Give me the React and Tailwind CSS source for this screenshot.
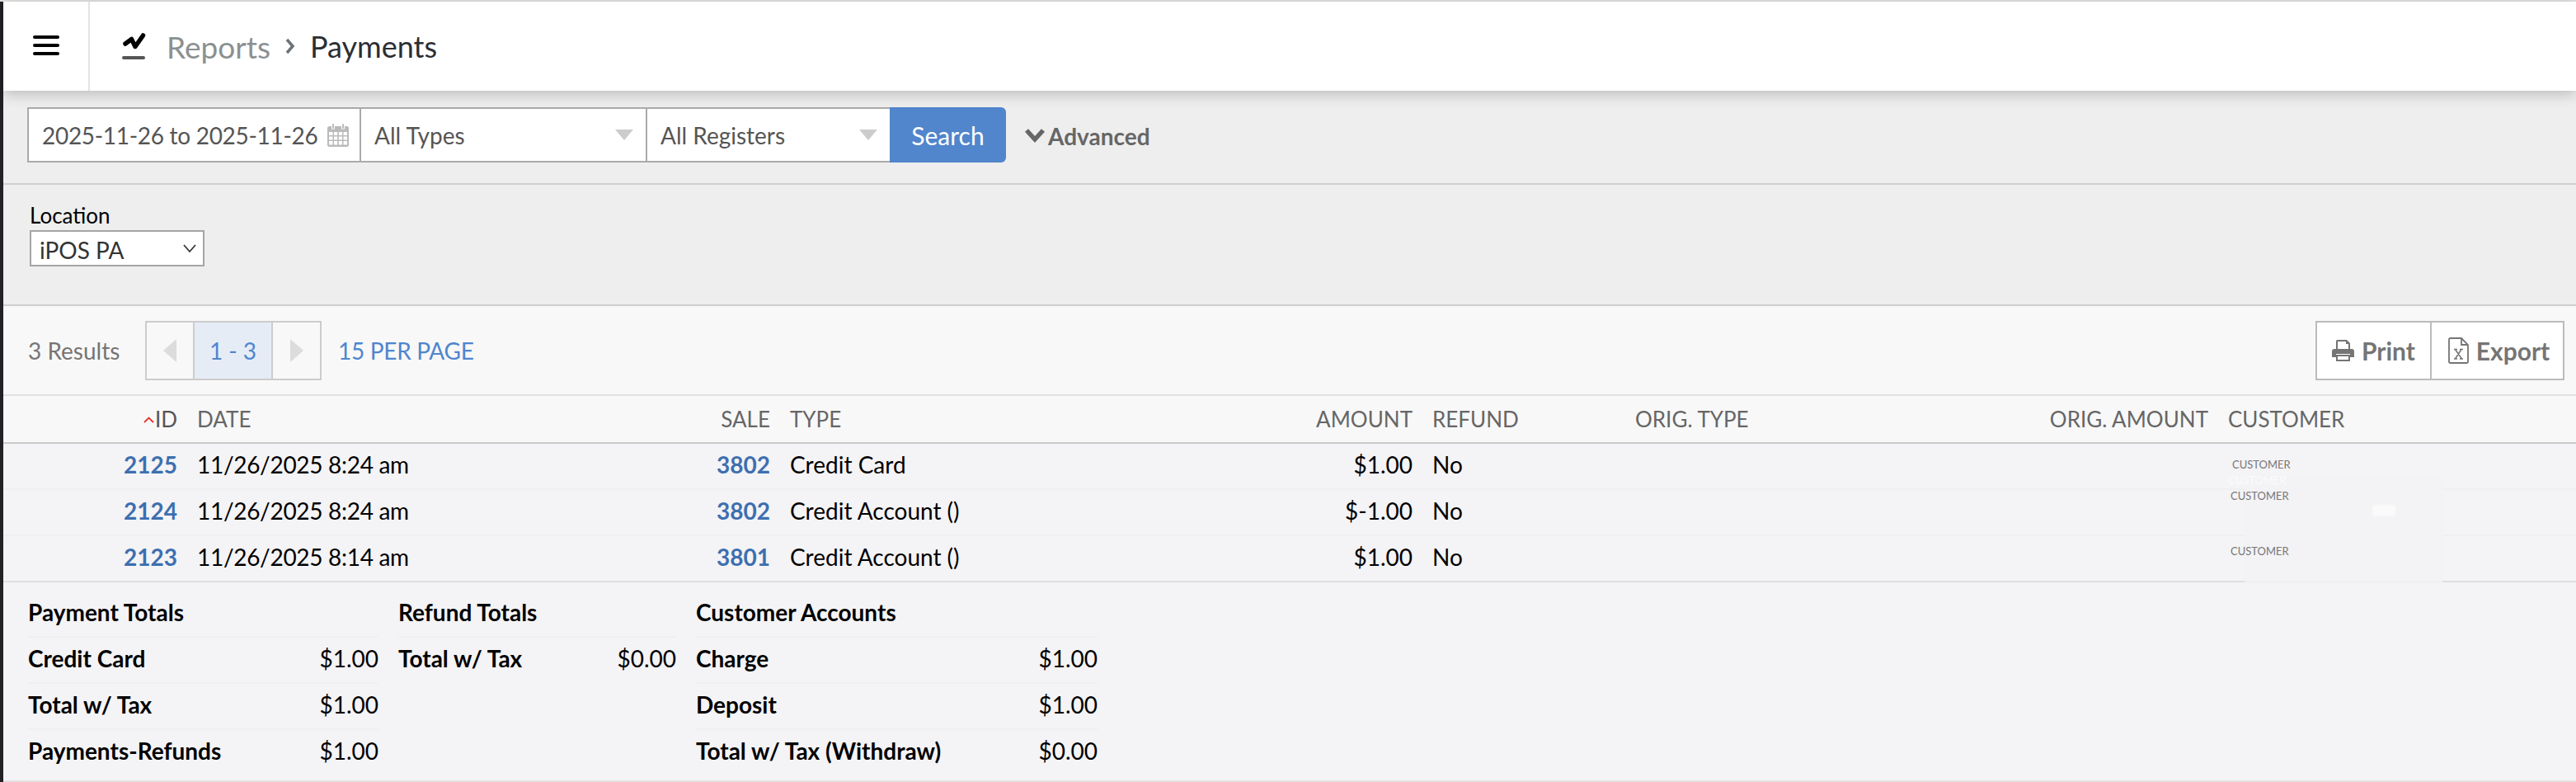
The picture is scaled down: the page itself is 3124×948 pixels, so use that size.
import React from "react";

const font = { fontFamily: "Lato, 'Liberation Sans', sans-serif" };

const cols = "grid grid-cols-[223px_473px_246px_454px_325px_246px_329px_390px_1fr]";

const rows = [
  ["2125", "11/26/2025 8:24 am", "3802", "Credit Card", "$1.00", "No"],
  ["2124", "11/26/2025 8:24 am", "3802", "Credit Account ()", "$-1.00", "No"],
  ["2123", "11/26/2025 8:14 am", "3801", "Credit Account ()", "$1.00", "No"],
];

function Caret() {
  return (
    <svg width="22" height="14" viewBox="0 0 22 14" className="shrink-0">
      <path d="M0 0H22L11 13Z" fill="#cccccc" />
    </svg>
  );
}

function Calendar() {
  return (
    <svg width="26" height="28" viewBox="0 0 26 28" className="shrink-0" fill="#bbbbbb">
      <path fillRule="evenodd" d="M2.5 3H5v3.500h4V3h8v3.500h4V3h2.500A2.500 2.500 0 0 1 26 5.500V25.500A2.500 2.500 0 0 1 23.500 28H2.500A2.500 2.500 0 0 1 0 25.500V5.500A2.500 2.500 0 0 1 2.500 3ZM2 10v4h4.500v-4ZM8 10v4h4.200v-4ZM13.800 10v4H18v-4ZM19.500 10v4H24v-4ZM2 15.500v4h4.500v-4ZM8 15.500v4h4.200v-4ZM13.800 15.500v4H18v-4ZM19.500 15.500v4H24v-4ZM2 21v4.500h4.500V21ZM8 21v4.500h4.200V21ZM13.800 21v4.500H18V21ZM19.500 21v4.500H24V21Z" />
      <rect x="6" y="0" width="2" height="6" rx="1" />
      <rect x="18" y="0" width="2" height="6" rx="1" />
    </svg>
  );
}

function Summary({ width, title, items, className = "" }) {
  return (
    <div className={`${width} ${className}`}>
      <div className="h-[65px] pt-1.5 flex items-center font-bold text-black">{title}</div>
      {items.map(([k, v]) => (
        <div key={k} className="h-14 pb-1 flex items-center justify-between border-t-2 border-[#efeef0] text-black">
          <span className="font-bold">{k}</span>
          <span>{v}</span>
        </div>
      ))}
    </div>
  );
}

export default function App() {
  return (
    <div style={font} className="w-[3124px] h-[948px] overflow-hidden bg-[#f4f3f5] flex flex-col text-[28px] leading-none">
      <div className="h-0.5 shrink-0 bg-[#e2e2e2]" />
      <div className="flex flex-1 min-h-0">
        <div className="w-1 shrink-0 bg-[#222226]" />
        <div className="flex-1 min-w-0 flex flex-col">
          {/* Header */}
          <header className="relative z-10 h-[108px] shrink-0 bg-white flex items-center shadow-[0_4px_16px_rgba(0,0,0,0.22)]">
            <div className="w-[105px] h-full shrink-0 border-r-2 border-[#e4e4e4] flex items-center justify-center">
              <div className="w-8 flex flex-col gap-1.5 mb-[3px]">
                <div className="h-1 rounded-full bg-black" />
                <div className="h-1 rounded-full bg-black" />
                <div className="h-1 rounded-full bg-black" />
              </div>
            </div>
            <svg width="32" height="36" viewBox="0 0 32 36" className="ml-[37px] mr-6 mb-[2px] shrink-0">
              <path d="M6 16 L13.500 10.500 L18 19.500 L27.500 6" fill="none" stroke="#000" strokeWidth="5.500" strokeLinecap="round" strokeLinejoin="round" />
              <rect x="2" y="31" width="28" height="4" rx="2" fill="#555" />
            </svg>
            <span className="text-[37px] text-[#8b9091]">Reports</span>
            <svg width="14" height="22" viewBox="0 0 14 22" className="mx-[17px] shrink-0">
              <path d="M3 3 L10 11 L3 19" fill="none" stroke="#6c7278" strokeWidth="3.500" />
            </svg>
            <span className="text-[36px] text-[#2b2e33]">Payments</span>
          </header>

          {/* Filters */}
          <section className="h-[114px] shrink-0 bg-[#eeeeee] border-b-2 border-[#cfcfcf] pl-[29px] pt-5 flex items-start">
            <div className="h-[67px] w-[405px] bg-white border-2 border-[#aaaaaa] flex items-center pl-4 pr-[13px] justify-between text-[#555555]">
              <span className="whitespace-nowrap tracking-[-0.3px]">2025-11-26 to 2025-11-26</span>
              <Calendar />
            </div>
            <div className="h-[67px] w-[347px] bg-white border-y-2 border-r-2 border-[#aaaaaa] flex items-center justify-between pl-4 pr-[15px] text-[#555555]">
              <span>All Types</span>
              <Caret />
            </div>
            <div className="h-[67px] w-[294px] bg-white border-y-2 border-[#aaaaaa] flex items-center justify-between pl-4 pr-[15px] text-[#555555]">
              <span>All Registers</span>
              <Caret />
            </div>
            <button className="h-[67px] w-[141px] bg-[#5185cc] rounded-r-md text-white text-[30px]">Search</button>
            <div className="h-[67px] ml-[22px] flex items-center font-bold text-[#666666]">
              <svg width="26" height="20" viewBox="0 0 26 20" className="mr-[3px]">
                <path d="M3 4 L13 15 L23 4" fill="none" stroke="#666" strokeWidth="5.500" />
              </svg>
              <span className="mt-0.5">Advanced</span>
            </div>
          </section>

          {/* Location */}
          <section className="h-[147px] shrink-0 bg-[#eeeeee] border-b-2 border-[#cfcfcf] pl-8 pt-6">
            <div className="text-black text-[26px] leading-[26px] mb-[5px]">Location</div>
            <div className="h-[44px] w-[212px] bg-white border-2 border-[#a5a5a5] flex items-center justify-between pl-2.5 pr-[7px] text-[#333333]">
              <span className="mt-1">iPOS PA</span>
              <svg width="18" height="12" viewBox="0 0 18 12">
                <path d="M2 2 L9 10 L16 2" fill="none" stroke="#333" strokeWidth="1.800" />
              </svg>
            </div>
          </section>

          {/* Toolbar */}
          <section className="h-[109px] shrink-0 bg-[#f8f8f8] border-b-2 border-[#e2e2e2] flex items-center pl-[30px] pr-[14px]">
            <span className="text-[#757575] w-[142px]">3 Results</span>
            <div className="h-[72px] flex border-2 border-[#cccccc]">
              <div className="w-[58px] flex items-center justify-center border-r-2 border-[#cccccc]">
                <svg width="16" height="28" viewBox="0 0 16 28"><path d="M16 0V28L0 14Z" fill="#dcdcdc" /></svg>
              </div>
              <div className="w-[95px] bg-[#e6ecf6] flex items-center justify-center border-r-2 border-[#cccccc] text-[#4f86cf]">1 - 3</div>
              <div className="w-[57px] flex items-center justify-center">
                <svg width="16" height="28" viewBox="0 0 16 28"><path d="M0 0V28L16 14Z" fill="#dcdcdc" /></svg>
              </div>
            </div>
            <span className="ml-5 text-[#4f86cf] tracking-[-0.3px]">15 PER PAGE</span>
            <div className="ml-auto h-[72px] flex border-2 border-[#bbbbbb] bg-white font-bold text-[#757575] text-[30px]">
              <div className="w-[139px] flex items-center justify-center gap-[9px] border-r-2 border-[#bbbbbb]">
                <svg width="27" height="26" viewBox="0 0 27 26" fill="#757575">
                  <path fillRule="evenodd" d="M5 1.500A1.500 1.500 0 0 1 6.500 0H18l4 4V11H20V5H17V2H7V11H5ZM3 11H24A3 3 0 0 1 27 14V21H22V17H5V21H0V14A3 3 0 0 1 3 11Z" />
                  <path fillRule="evenodd" d="M5 18H22V26H5ZM7 20V24H20V20Z" />
                </svg>
                <span>Print</span>
              </div>
              <div className="w-[159px] pl-1 flex items-center justify-center gap-[9px]">
                <svg width="25" height="32" viewBox="0 0 25 32">
                  <path d="M1 2.500A1.500 1.500 0 0 1 2.500 1H16L24 9V29.500A1.500 1.500 0 0 1 22.500 31H2.500A1.500 1.500 0 0 1 1 29.500Z M16 1V9H24" fill="none" stroke="#757575" strokeWidth="1.800" />
                  <path d="M7 14.500H11M14 14.500H18M8.500 14.500L16.500 26M16 14.500L8.500 26M7 26H11M14 26H18" fill="none" stroke="#757575" strokeWidth="1.500" />
                </svg>
                <span>Export</span>
              </div>
            </div>
          </section>

          {/* Table header */}
          <div className={`${cols} h-[58px] shrink-0 bg-[#f8f8f8] border-b-2 border-[#c9c9c9] items-center text-[26px] text-[#666666]`}>
            <div className="px-3 flex justify-end items-center">
              <svg width="13" height="8" viewBox="0 0 13 8" className="mr-px mt-0.5">
                <path d="M1 7 L6.500 1.500 L12 7" fill="none" stroke="#e2322d" strokeWidth="1.800" />
              </svg>
              <span className="text-[#555555]">ID</span>
            </div>
            <div className="px-3">DATE</div>
            <div className="px-3 text-right">SALE</div>
            <div className="px-3">TYPE</div>
            <div className="px-3 text-right">AMOUNT</div>
            <div className="px-3">REFUND</div>
            <div className="px-3">ORIG. TYPE</div>
            <div className="px-3 text-right">ORIG. AMOUNT</div>
            <div className="px-3">CUSTOMER</div>
          </div>

          {/* Rows */}
          <div className="relative shrink-0">
            {rows.map((r, i) => (
              <div key={i} className={`${cols} h-14 pb-1 items-center text-black border-b-2 ${i === 2 ? "border-[#dfdee0]" : "border-[#efeef0]"}`}>
                <div className="px-3 text-right font-bold text-[#3d6fb0]">{r[0]}</div>
                <div className="px-3 tracking-[-0.3px]">{r[1]}</div>
                <div className="px-3 text-right font-bold text-[#3d6fb0]">{r[2]}</div>
                <div className="px-3">{r[3]}</div>
                <div className="px-3 text-right">{r[4]}</div>
                <div className="px-3">{r[5]}</div>
                <div />
                <div />
                <div />
              </div>
            ))}
            {/* Obscured customer cell */}
            <div className="absolute left-[2718px] top-[40px] w-[240px] h-[128px] bg-[#f3f2f4] blur-[1px]" />
            <div className="absolute left-[2873px] top-[74px] w-7 h-3.5 bg-[#fafafb] blur-[1px]" />
            <div className="absolute left-[2703px] top-[19px] text-[13px] text-[#777777]">CUSTOMER</div>
            <div className="absolute left-[2698px] top-[38px] text-[13px] text-[#fbfbfc]">CUSTOMER</div>
            <div className="absolute left-[2701px] top-[57px] text-[13px] text-[#777777]">CUSTOMER</div>
            <div className="absolute left-[2701px] top-[124px] text-[13px] text-[#777777]">CUSTOMER</div>
          </div>

          {/* Totals */}
          <section className="flex-1 min-h-0 pl-[30px] flex border-b-2 border-[#e2e1e3]">
            <Summary width="w-[425px]" title="Payment Totals" items={[["Credit Card", "$1.00"], ["Total w/ Tax", "$1.00"], ["Payments-Refunds", "$1.00"]]} />
            <Summary width="w-[337px]" className="ml-6" title="Refund Totals" items={[["Total w/ Tax", "$0.00"]]} />
            <Summary width="w-[487px]" className="ml-6" title="Customer Accounts" items={[["Charge", "$1.00"], ["Deposit", "$1.00"], ["Total w/ Tax (Withdraw)", "$0.00"]]} />
          </section>
        </div>
      </div>
    </div>
  );
}
